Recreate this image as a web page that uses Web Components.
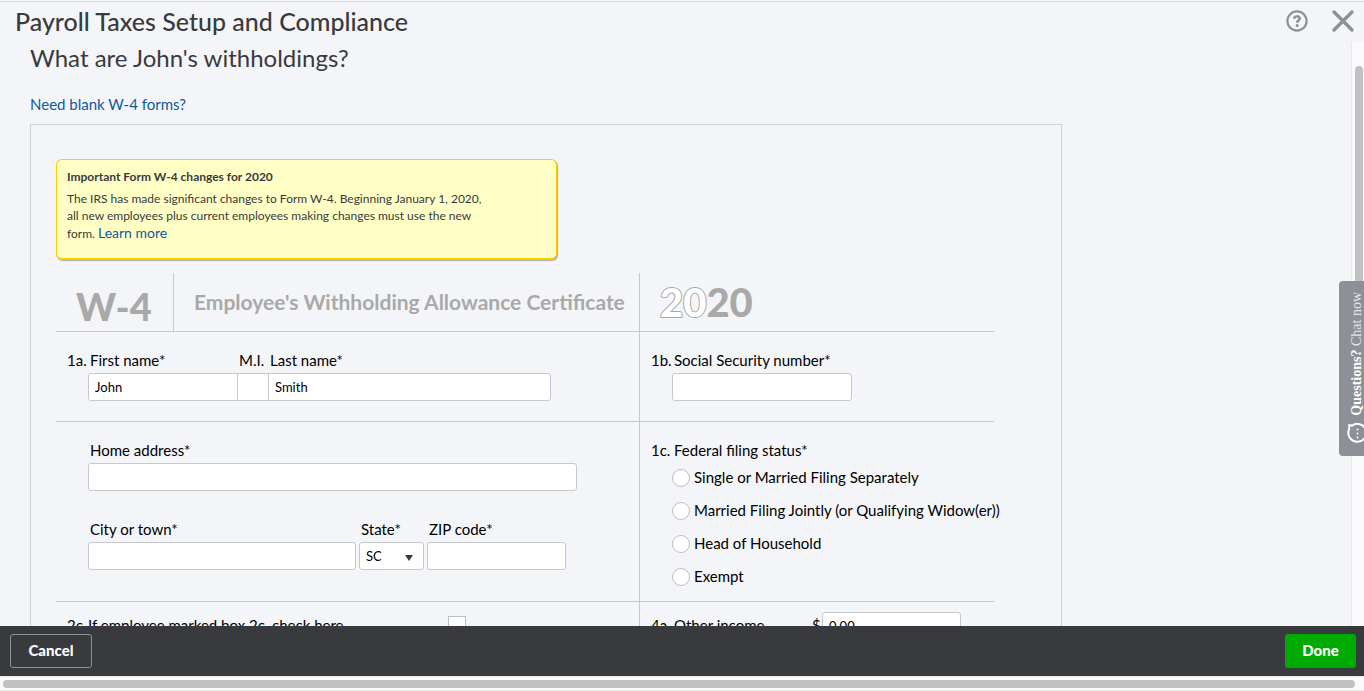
<!DOCTYPE html>
<html lang="en">
<head>
<meta charset="utf-8">
<meta name="viewport" content="width=device-width, initial-scale=1">
<title>Payroll Taxes Setup and Compliance</title>
<style>
  body { margin: 0; background: #f4f5f8; color: #393a3d; font: 15px/20px Lato, "Open Sans", sans-serif; }
</style>
</head>
<body>
<payroll-page></payroll-page>

<script>
const base = `*, *::before, *::after { box-sizing: border-box; }
  a { color: #0b5aa0; text-decoration: none; }`;

function define(name, css, html) {
  customElements.define(name, class extends HTMLElement {
    constructor() {
      super();
      const root = this.attachShadow({ mode: 'open' });
      root.innerHTML = `<style>${base}${css}</style>` +
        html.replace(/\{(\w+)\}/g, (_, key) => this.getAttribute(key) || '');
    }
  });
}

define('page-header', `
  :host { box-sizing: border-box; display: flex; justify-content: space-between; align-items: center; height: 41px; margin-top: 1px;
    padding: 0 9px 3px 15px; border-top: 1px solid #d9dadd; flex: none; }
  h1 { margin: 0; font-size: 25px; line-height: 32px; font-weight: 500; }
  div { display: flex; gap: 22px; align-items: center; }
  button { border: 0; padding: 0; background: none; display: flex; }
`, `
  <h1><slot></slot></h1>
  <div>
    <button aria-label="Help"><svg width="24" height="24" viewBox="0 0 24 24" fill="none" stroke="#8d9096" stroke-width="2.2">
      <circle cx="12" cy="12" r="9.6"/><path d="M9.200 9.800c0-3.200 5.600-3.200 5.600-.2 0 2-2.700 2-2.700 4.200" stroke-width="2.500"/><circle cx="12.100" cy="16.500" r="1.500" fill="#8d9096" stroke="none"/></svg></button>
    <button aria-label="Close"><svg width="24" height="24" viewBox="0 0 24 24" fill="none" stroke="#8d9096" stroke-width="3.4" stroke-linecap="round">
      <path d="M3 3l18 18M21 3L3 21"/></svg></button>
  </div>`);

define('notice-box', `
  :host { box-sizing: border-box; display: block; max-width: 501px; min-height: 101px; padding: 7px 65px 15px 10px; background: #ffffc5;
    border: 1px solid #fc0; border-bottom-width: 2px; border-radius: 6px; box-shadow: 1px 1px 1px #aaa;
    font-size: 12px; line-height: 17px; }
  h3 { margin: 0 0 3px; font-size: 12px; line-height: 20px; font-weight: 700; }
  p { margin: 0; }
  ::slotted(a) { color: #0b5aa0; text-decoration: none; font-size: 14px; }
`, `<h3>{heading}</h3><p><slot></slot></p>`);

define('text-field', `
  :host { display: block; color: #000; }
  label { display: block; padding-left: 2px; margin-bottom: 3px; white-space: nowrap; }
  input { display: block; width: 100%; height: 28px; padding: 0 6px; border: 1px solid #c7c8ca;
    border-radius: var(--corners, 3px); background: #fff; color: #000; font: 13px/18px Lato, "Open Sans", sans-serif; }
`, `<label for="box">{label}</label><input id="box" type="text" value="{value}">`);

define('select-field', `
  :host { display: block; color: #000; }
  label { display: block; padding-left: 2px; margin-bottom: 3px; white-space: nowrap; }
  div { display: grid; align-items: center; }
  select, svg { grid-area: 1 / 1; }
  select { appearance: none; width: 100%; height: 28px; padding: 0 6px; border: 1px solid #c7c8ca; border-radius: 3px;
    background: #fff; color: #000; font: 13px/18px Lato, "Open Sans", sans-serif; }
  svg { justify-self: end; margin: 4px 11px 0 0; pointer-events: none; }
`, `<label for="box">{label}</label><div><select id="box"><option>{value}</option></select>
  <svg width="8" height="6"><path d="M0 0h8L4 6z" fill="#393a3d"/></svg></div>`);

define('radio-list', `
  :host { display: block; color: #000; }
  fieldset { margin: 0; padding: 0; border: 0; display: grid; gap: 13px; }
  legend { padding: 0 0 7px 2px; }
  label { display: flex; align-items: center; gap: 4px; white-space: nowrap; }
  input { appearance: none; width: 18px; height: 18px; margin: 2px 0 0; border: 1px solid #babec5; border-radius: 50%; background: #fff; flex: none; }
`, `<fieldset><legend>{label}</legend>
  <label><input type="radio" name="status">Single or Married Filing Separately</label>
  <label><input type="radio" name="status">Married Filing Jointly (or Qualifying Widow(er))</label>
  <label><input type="radio" name="status">Head of Household</label>
  <label><input type="radio" name="status">Exempt</label></fieldset>`);

define('form-cell', `
  :host { display: grid; grid-template-columns: 21px minmax(0, 1fr); padding: 18px 0 15px 11px; color: #000; }
  span { white-space: nowrap; }
`, `<span>{num}</span><div><slot></slot></div>`);

define('w4-form', `
  :host { display: grid; grid-template-columns: 584px minmax(0, 1fr); max-width: 938px; margin-top: 13px; color: #000; }
  .c { border-bottom: 1px solid #c7c8ca; }
  .c:nth-child(odd of .c) { border-right: 1px solid #c7c8ca; }
  .head { display: flex; height: 59px; align-items: center; color: #a9a9a9; font-weight: 900; }
  .code { width: 118px; height: 100%; border-right: 1px solid #c7c8ca; padding: 7px 0 0 20px; font-size: 38px; line-height: 52px; white-space: nowrap; }
  h2 { margin: 0 0 0 20px; font-size: 21px; line-height: 28px; font-weight: 700; white-space: nowrap; }
  .year { padding-left: 20px; font-size: 40px; line-height: 52px; }
  .year span { color: #fff; -webkit-text-stroke: 2px #a9a9a9; paint-order: stroke fill; }
  .row { display: flex; }
  .gap { gap: 3px; margin-top: 28px; }
  .one { padding-bottom: 20px; }
  .first { width: 150px; --corners: 3px 0 0 3px; }
  .mi { width: 32px; --corners: 0; margin: 0 -1px; }
  .last { width: 283px; --corners: 0 3px 3px 0; }
  .ssn { width: 180px; }
  .home { max-width: 489px; }
  .city { width: 268px; } .state { width: 65px; } .zip { width: 139px; }
  .three { padding-top: 13px; min-height: 90px; }
  .check { display: grid; grid-template-columns: 360px 18px; }
  .check label { padding-left: 0; }
  .check input { appearance: none; width: 18px; height: 18px; margin: 1px 0 0; border: 1px solid #babec5; background: #fff; }
  .income { display: grid; grid-template-columns: 140px 10px 139px; }
  .income label { padding-left: 2px; }
  .income input { height: 28px; width: 100%; margin-top: -3px; padding: 0 6px; border: 1px solid #c7c8ca; border-radius: 3px; font: 13px/18px Lato, "Open Sans", sans-serif; }
`, `
  <div class="c head"><div class="code">W-4</div><h2>Employee's Withholding Allowance Certificate</h2></div>
  <div class="c head"><div class="year"><span>20</span>20</div></div>
  <form-cell class="c one" num="1a."><div class="row">
    <text-field class="first" label="First name*" value="John"></text-field>
    <text-field class="mi" label="M.I."></text-field>
    <text-field class="last" label="Last name*" value="Smith"></text-field></div></form-cell>
  <form-cell class="c one" num="1b."><text-field class="ssn" label="Social Security number*"></text-field></form-cell>
  <form-cell class="c"><text-field class="home" label="Home address*"></text-field>
    <div class="row gap">
      <text-field class="city" label="City or town*"></text-field>
      <select-field class="state" label="State*" value="SC"></select-field>
      <text-field class="zip" label="ZIP code*"></text-field></div></form-cell>
  <form-cell class="c" num="1c."><radio-list label="Federal filing status*"></radio-list></form-cell>
  <form-cell class="c three" num="2c."><div class="check"><label for="box2c">If employee marked box 2c, check here</label><input id="box2c" type="checkbox"></div></form-cell>
  <form-cell class="c three" num="4a."><div class="income"><label for="income">Other income</label><span>$</span><input id="income" type="text" value="0.00"></div></form-cell>`);

define('chat-tab', `
  :host { position: absolute; right: 0; top: 281px; width: 25px; height: 175px; overflow: hidden; border-radius: 4px 0 0 4px; background: #8d9096; }
  button { display: flex; flex-direction: column; align-items: center; gap: 7px; width: 33px; height: 100%; padding: 11px 0 0 2px; border: 0; background: none; color: #fff; }
  span { writing-mode: vertical-rl; transform: rotate(180deg); font: 14px/18px "Liberation Serif", serif; white-space: nowrap; color: #e4e5e8; }
  b { color: #fff; }
`, `<button><span><b>Questions?</b> Chat now</span>
  <svg width="20" height="20" viewBox="0 0 20 20" fill="none" stroke="#fff" stroke-width="2"><path d="M2.2 2.2V6A9 9 0 1 0 5 2.600z"/><g fill="#fff" stroke="none"><circle cx="10.500" cy="6.500" r="1"/><circle cx="10.500" cy="10.500" r="1"/><circle cx="10.500" cy="14.500" r="1"/></g></svg></button>`);

define('action-bar', `
  :host { box-sizing: border-box; display: flex; justify-content: space-between; align-items: center; flex: none; height: 50px; padding: 0 8px 0 10px; background: #393a3d; }
  button { height: 34px; padding: 0 0 2px; border-radius: 3px; color: #fff; font: 900 15px/20px Lato, "Open Sans", sans-serif; }
  .cancel { width: 82px; border: 1px solid #8d9096; background: none; }
  .done { width: 71px; border: 0; background: #0a0; }
`, `<button class="cancel">Cancel</button><button class="done">Done</button>`);

define('scroll-strip', `
  :host { box-sizing: border-box; display: flex; flex: none; background: #fafafa; border: 0 solid #e8e8e8; }
  :host([axis="y"]) { flex-direction: column; width: 13px; border-left-width: 1px; padding: 24px 1px 0 3px; }
  :host([axis="x"]) { height: 15px; border-width: 1px 0; padding: 3px 9px 2px 3px; }
  i { display: block; border-radius: 4px; background: #c1c1c1; flex: 1; }
  :host([axis="y"]) i { flex: 0 0 50%; }
`, `<i></i>`);

define('payroll-page', `
  :host { position: relative; display: flex; flex-direction: column; height: 100vh; overflow: hidden; }
  .body { flex: 1; min-height: 0; display: flex; }
  main { flex: 1; min-width: 0; overflow: hidden; padding: 0 30px; }
  h2 { margin: 0; font-size: 24px; line-height: 32px; font-weight: 400; }
  .blank { display: block; width: max-content; margin: 20px 0 10px; }
  .card { max-width: 1032px; padding: 34px 67px 34px 25px; border: 1px solid #d0d1d4; }
`, `
  <page-header>Payroll Taxes Setup and Compliance</page-header>
  <div class="body">
    <main>
      <h2>What are John's withholdings?</h2>
      <a class="blank" href="#">Need blank W-4 forms?</a>
      <div class="card">
        <notice-box heading="Important Form W-4 changes for 2020">The IRS has made significant changes to Form W-4. Beginning January 1, 2020, all new employees plus current employees making changes must use the new form. <a href="#">Learn more</a></notice-box>
        <w4-form></w4-form>
      </div>
    </main>
    <scroll-strip axis="y"></scroll-strip>
  </div>
  <action-bar></action-bar>
  <scroll-strip axis="x"></scroll-strip>
  <chat-tab></chat-tab>`);
</script>
</body>
</html>
